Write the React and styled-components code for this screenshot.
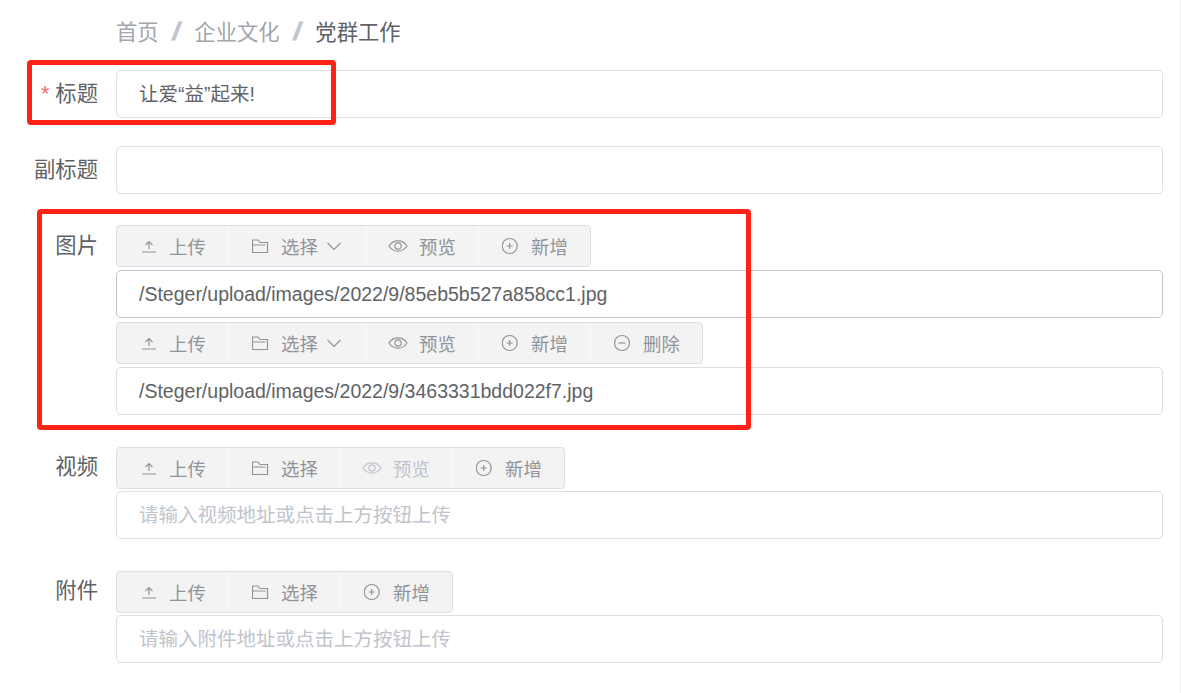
import React from "react";
import styled, { createGlobalStyle } from "styled-components";

const Global = createGlobalStyle`
  html, body { margin: 0; padding: 0; background: #fff; }
  body { font-family: "Liberation Sans", "Noto Sans CJK SC", sans-serif; overflow: hidden; }
`;

const Page = styled.div`
  position: relative;
  width: 1181px;
  height: 693px;
  box-sizing: border-box;
  padding: 0 17px 0 0;
  border-right: 1px solid #eeeeee;
  overflow: hidden;
`;

const Crumbs = styled.nav`
  display: flex;
  align-items: center;
  height: 60px;
  padding-left: 116px;
  font-size: 21.33px;
`;
const Crumb = styled.span`
  color: ${(p) => (p.$current ? "#606266" : "#a3a6ad")};
`;
const Slash = styled.span`
  color: #c0c4cc;
  font-weight: 700;
  font-style: italic;
  margin: 4px 15px 0 14px;
  font-size: 24px;
  -webkit-text-stroke: 1px #c0c4cc;
`;

const Row = styled.div`
  display: flex;
  margin-top: ${(p) => p.$top}px;
`;
const Label = styled.label`
  width: 98px;
  flex: none;
  text-align: right;
  font-size: 21.33px;
  line-height: 48px;
  color: #606266;
  margin-right: 18px;
  margin-top: ${(p) => p.$top || 0}px;
`;
const Star = styled.span`
  color: #f56c6c;
  margin-right: 6px;
`;
const Field = styled.div`
  flex: 1;
  min-width: 0;
  display: flex;
  flex-direction: column;
`;
const Input = styled.div`
  box-sizing: border-box;
  height: 48px;
  margin-top: ${(p) => p.$top || 0}px;
  padding: 0 22px;
  border: 1px solid ${(p) => (p.$hover ? "#c0c4cc" : "#dcdfe6")};
  border-radius: 5px;
  font-size: 19.5px;
  line-height: ${(p) => (p.$placeholder ? 47 : 46)}px;
  color: ${(p) => (p.$placeholder ? "#c0c4cc" : "#606266")};
  background: #fff;
  white-space: nowrap;
`;
const Toolbar = styled.div`
  display: flex;
  align-self: flex-start;
  box-sizing: border-box;
  height: 42px;
  margin-top: ${(p) => p.$top || 0}px;
  border: 1px solid #dcdfe6;
  border-radius: 4px;
  background: #f3f3f3;
`;
const ToolButton = styled.div`
  box-sizing: border-box;
  display: flex;
  align-items: center;
  width: ${(p) => (p.$caret ? 138 : 112)}px;
  padding: 0 0 1px 23px;
  font-size: 18.4px;
  color: ${(p) => (p.$disabled ? "#c0c4cc" : "#909399")};
  white-space: nowrap;
  &:first-child { width: 111px; }
  & + & { border-left: 1px solid #fafafa; }
`;
const ToolText = styled.span`
  margin-left: 11px;
`;
const Mark = styled.div`
  position: absolute;
  box-sizing: border-box;
  left: ${(p) => p.$l}px;
  top: ${(p) => p.$t}px;
  width: ${(p) => p.$w}px;
  height: ${(p) => p.$h}px;
  border: 5px solid #ff2215;
  border-radius: 4px;
  pointer-events: none;
`;
const Glyph = styled.svg`
  flex: none;
  fill: none;
  stroke: currentColor;
  stroke-width: 1.2;
`;
const EyeGlyph = styled(Glyph)`
  margin-left: -2px;
`;
const CaretGlyph = styled(Glyph)`
  margin-left: 9px;
  stroke-width: 1.1;
`;

const icons = {
  upload: (
    <Glyph width="18" height="18" viewBox="0 0 18 18">
      <path d="M2 15h14M9 12V4.500M5.500 8 9 4.500 12.500 8" />
    </Glyph>
  ),
  folder: (
    <Glyph width="18" height="18" viewBox="1 0 18 18">
      <path d="M1.500 15.500V3h5.500l2 2.500h7.500v10ZM1.500 8h13" />
    </Glyph>
  ),
  eye: (
    <EyeGlyph width="20" height="18" viewBox="0 0 20 18">
      <path d="M1 9c2.400-3.600 5.400-5.200 9-5.200s6.600 1.600 9 5.200c-2.400 3.600-5.400 5.200-9 5.200S3.400 12.600 1 9Z" />
      <circle cx="10" cy="9" r="3.200" />
    </EyeGlyph>
  ),
  plus: (
    <Glyph width="18" height="18" viewBox="0 0 18 18">
      <circle cx="7.700" cy="9" r="7.500" />
      <path d="M7.700 6v6M4.700 9h6" />
    </Glyph>
  ),
  minus: (
    <Glyph width="18" height="18" viewBox="0 0 18 18">
      <circle cx="8" cy="9" r="7.500" />
      <path d="M4.500 9h7" />
    </Glyph>
  ),
};
const Caret = () => (
  <CaretGlyph width="14" height="14" viewBox="0 0 14 14">
    <path d="M0.500 4l6.500 6.500L13.500 4" />
  </CaretGlyph>
);

const Tool = ({ icon, text, caret, disabled }) => (
  <ToolButton $caret={caret} $disabled={disabled}>
    {icons[icon]}
    <ToolText>{text}</ToolText>
    {caret && <Caret />}
  </ToolButton>
);

const UP = { icon: "upload", text: "上传" };
const SEL = { icon: "folder", text: "选择" };
const PRE = { icon: "eye", text: "预览" };
const ADD = { icon: "plus", text: "新增" };
const DEL = { icon: "minus", text: "删除" };

const Bar = ({ items, top }) => (
  <Toolbar $top={top}>
    {items.map((t) => (
      <Tool key={t.text} {...t} />
    ))}
  </Toolbar>
);

export default function App() {
  return (
    <Page>
      <Global />
      <Crumbs>
        <Crumb>首页</Crumb>
        <Slash>/</Slash>
        <Crumb>企业文化</Crumb>
        <Slash>/</Slash>
        <Crumb $current>党群工作</Crumb>
      </Crumbs>
      <Row $top={10}>
        <Label>
          <Star>*</Star>标题
        </Label>
        <Field>
          <Input>让爱“益”起来!</Input>
        </Field>
      </Row>
      <Row $top={28}>
        <Label>副标题</Label>
        <Field>
          <Input />
        </Field>
      </Row>
      <Row $top={31}>
        <Label $top={-3}>图片</Label>
        <Field>
          <Bar items={[UP, { ...SEL, caret: true }, PRE, ADD]} />
          <Input $top={3} $hover>
            /Steger/upload/images/2022/9/85eb5b527a858cc1.jpg
          </Input>
          <Bar top={4} items={[UP, { ...SEL, caret: true }, PRE, ADD, DEL]} />
          <Input $top={3}>/Steger/upload/images/2022/9/3463331bdd022f7.jpg</Input>
        </Field>
      </Row>
      <Row $top={32}>
        <Label $top={-4}>视频</Label>
        <Field>
          <Bar items={[UP, SEL, { ...PRE, disabled: true }, ADD]} />
          <Input $top={2} $placeholder>
            请输入视频地址或点击上方按钮上传
          </Input>
        </Field>
      </Row>
      <Row $top={32}>
        <Label $top={-4}>附件</Label>
        <Field>
          <Bar items={[UP, SEL, ADD]} />
          <Input $top={2} $placeholder>
            请输入附件地址或点击上方按钮上传
          </Input>
        </Field>
      </Row>
      <Mark $l={27} $t={60} $w={309} $h={65} />
      <Mark $l={37} $t={209} $w={714} $h={221} />
    </Page>
  );
}
